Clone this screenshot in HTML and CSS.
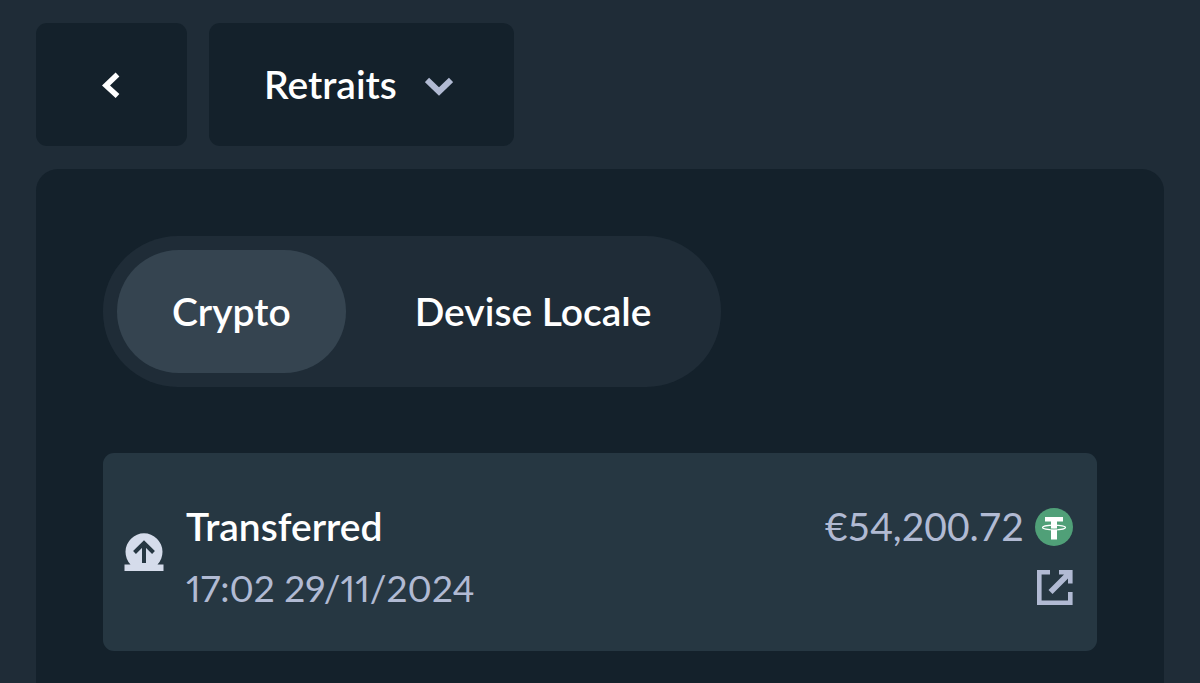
FILE: index.html
```html
<!DOCTYPE html>
<html lang="fr">
<head>
    <meta charset="UTF-8">
    <meta name="viewport" content="width=device-width, initial-scale=1.0">
    <title>Retraits</title>
    <link rel="stylesheet" href="styles.css">
</head>
<body>
    <div class="toolbar">
        <button type="button" class="back-btn" aria-label="Retour">
            <svg width="19" height="26" viewBox="0 0 19 26">
                <path d="M15.5 2.5 L4 13.5 L15.5 24" fill="none" stroke="#fff" stroke-width="5.5"/>
            </svg>
        </button>
        <div class="select-box">
            <select class="select" aria-label="Type de transaction">
                <option>Retraits</option>
            </select>
            <svg class="select-arrow" width="28" height="20" viewBox="0 0 28 20">
                <path d="M2 3 L14 14.5 L26 3" fill="none" stroke="#b1bad3" stroke-width="6"/>
            </svg>
        </div>
    </div>

    <main class="panel">
        <div class="tabs">
            <button type="button" class="tab active">Crypto</button>
            <button type="button" class="tab">Devise Locale</button>
        </div>

        <div class="transaction">
            <svg class="status-icon" width="40" height="38" viewBox="0 0 40 38">
                <path d="M0.5 31.5 H6.5 A18.5 18.5 0 1 1 33.5 31.5 H39.5 V38 H0.5 Z" fill="#d5dceb"/>
                <path d="M20 30 V11 M10.5 19.5 L20 10 L29.5 19.5" fill="none" stroke="#263742" stroke-width="4"/>
            </svg>
            <div class="details">
                <div class="status">Transferred</div>
                <div class="date">17:02 29/11/2024</div>
            </div>
            <div class="summary">
                <div class="amount">
                    <span>€54,200.72</span>
                    <svg width="38" height="38" viewBox="0 0 38 38">
                        <circle cx="19" cy="19" r="19" fill="#50a078"/>
                        <path d="M10 9 H28 V13.5 H22 V31.5 H16 V13.5 H10 Z" fill="#fff"/>
                        <ellipse cx="19" cy="19.5" rx="11.5" ry="2.4" fill="none" stroke="#fff" stroke-width="1.2"/>
                        <path d="M15 20.8 Q19 21.3 23 20.8" fill="none" stroke="#50a078" stroke-width="0.8"/>
                    </svg>
                </div>
                <a href="#" class="link" aria-label="Voir la transaction">
                    <svg width="36" height="36" viewBox="0 0 36 36">
                        <path d="M13 2.3 H2.3 V32.7 H33.3 V22" fill="none" stroke="#b1bad3" stroke-width="4.6"/>
                        <path d="M22 0 H35.6 V13.5 H31 V8.5 L15.5 24 L11.5 20 L27 4.6 H22 Z" fill="#b1bad3"/>
                    </svg>
                </a>
            </div>
        </div>
    </main>
</body>
</html>
```

FILE: styles.css
```css
* {
    margin: 0;
    padding: 0;
    box-sizing: border-box;
}

body {
    font-family: Lato, "Liberation Sans", sans-serif;
    font-size: 39px;
    line-height: 61px;
    color: #fff;
    background: #1f2c37;
    min-height: 100vh;
    display: flex;
    flex-direction: column;
    gap: 23px;
    padding: 23px 36px 0;
}

svg {
    display: block;
    flex-shrink: 0;
}

button,
select {
    font: inherit;
    font-weight: 600;
    color: #fff;
    border: none;
    cursor: pointer;
}

.toolbar {
    display: flex;
    gap: 22px;
}

.back-btn {
    display: flex;
    align-items: center;
    justify-content: center;
    padding: 48px 66px;
    background: #14212b;
    border-radius: 11px;
}

.select-box {
    position: relative;
    display: flex;
}

.select {
    appearance: none;
    padding: 31px 117px 31px 55px;
    background: #14212b;
    border-radius: 11px;
}

.select-arrow {
    position: absolute;
    right: 61px;
    top: 54px;
    pointer-events: none;
}

.panel {
    flex: 1;
    padding: 67px;
    background: #14212b;
    border-radius: 22px 22px 0 0;
}

.tabs {
    display: inline-flex;
    gap: 14px;
    padding: 14px;
    background: #1f2c37;
    border-radius: 75px;
    vertical-align: top;
}

.tab {
    padding: 31px 55px;
    background: none;
    border-radius: 62px;
}

.tab.active {
    background: #354450;
}

.transaction {
    display: flex;
    align-items: center;
    gap: 22px;
    margin-top: 66px;
    padding: 0 24px 0 21px;
    background: #263742;
    border-radius: 11px;
}

.details {
    flex: 1;
}

.details,
.summary {
    padding: 43px 0 33px;
}

.status {
    font-weight: 600;
}

.date,
.amount {
    color: #b1bad3;
}

.date {
    font-size: 37px;
    font-variant-numeric: proportional-nums;
}

.summary {
    display: flex;
    flex-direction: column;
    align-items: flex-end;
}

.amount {
    display: flex;
    align-items: center;
    gap: 11px;
}

.link {
    display: flex;
    align-items: center;
    height: 61px;
}
```
